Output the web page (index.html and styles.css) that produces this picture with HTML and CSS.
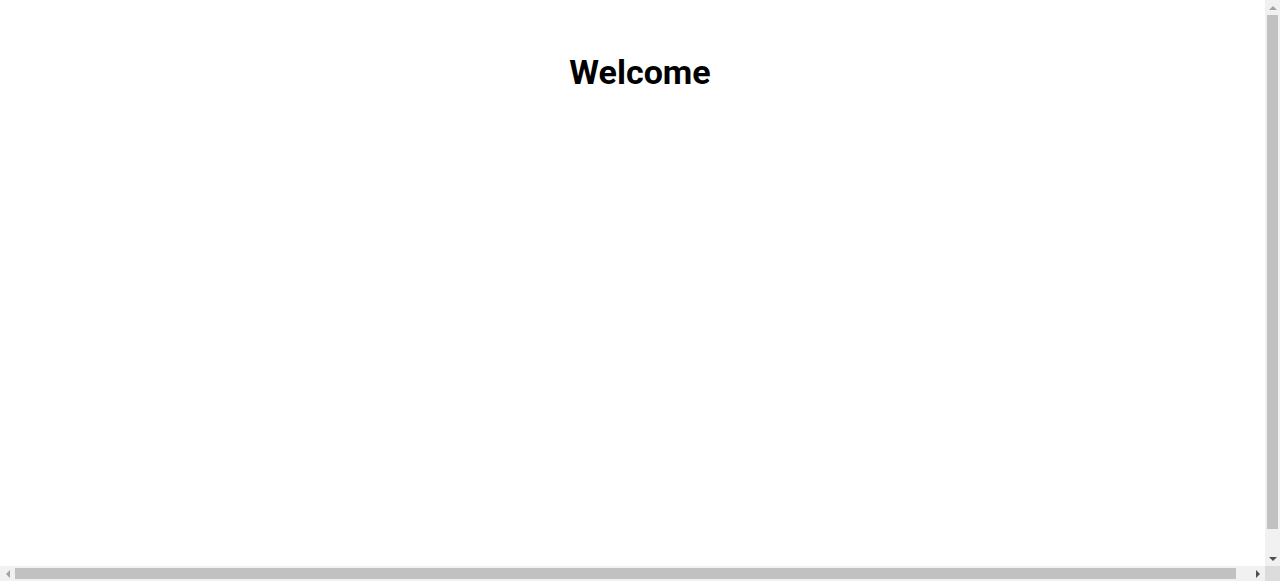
FILE: index.html
```html
<!DOCTYPE html>
<html lang="en">
<head>
<meta charset="utf-8">
<title>Welcome</title>
<link rel="stylesheet" href="styles.css">
</head>
<body>
<div class="page">
  <h1 class="title">Welcome</h1>
</div>

<div class="vscroll" aria-hidden="true">
  <div class="sbtn"><span class="arrow up"></span></div>
  <div class="vtrack"><div class="vthumb"></div></div>
  <div class="sbtn"><span class="arrow down"></span></div>
</div>
<div class="hscroll" aria-hidden="true">
  <div class="sbtn"><span class="arrow left"></span></div>
  <div class="htrack"><div class="hthumb"></div></div>
  <div class="sbtn"><span class="arrow right"></span></div>
</div>
<div class="corner" aria-hidden="true"></div>
</body>
</html>
```

FILE: styles.css
```css
html, body {
  margin: 0;
  padding: 0;
  background: #ffffff;
  overflow: hidden;
}
.page {
  box-sizing: border-box;
  width: 100%;
  height: 581px;
  padding-top: 52px;
}
.title {
  margin: 0;
  font-family: Roboto, "Liberation Sans", sans-serif;
  font-weight: 700;
  font-size: 34px;
  line-height: 40px;
  color: #000000;
  text-align: center;
}

/* browser scrollbars */
.vscroll {
  position: fixed;
  top: 0;
  right: 0;
  width: 15px;
  height: 566px;
  background: #f1f1f1;
  display: flex;
  flex-direction: column;
}
.hscroll {
  position: fixed;
  left: 0;
  bottom: 0;
  width: 1265px;
  height: 15px;
  background: #f1f1f1;
  display: flex;
}
.corner {
  position: fixed;
  right: 0;
  bottom: 0;
  width: 15px;
  height: 15px;
  background: #dcdcdc;
}
.sbtn {
  flex: 0 0 15px;
  width: 15px;
  height: 15px;
  display: flex;
  align-items: center;
  justify-content: center;
}
.vtrack {
  flex: 1;
  padding: 0 2px;
}
.vthumb {
  height: 514px;
  background: #c1c1c1;
}
.htrack {
  flex: 1;
  padding: 2px 0;
}
.hthumb {
  width: 1221px;
  height: 11px;
  background: #c1c1c1;
}
.arrow {
  width: 0;
  height: 0;
  border-style: solid;
  border-color: transparent;
}
.arrow.up {
  border-width: 0 4px 4px 4px;
  border-bottom-color: #a3a3a3;
}
.arrow.down {
  border-width: 4px 4px 0 4px;
  border-top-color: #505050;
}
.arrow.left {
  border-width: 4px 4px 4px 0;
  border-right-color: #a3a3a3;
}
.arrow.right {
  border-width: 4px 0 4px 4px;
  border-left-color: #505050;
}
```
